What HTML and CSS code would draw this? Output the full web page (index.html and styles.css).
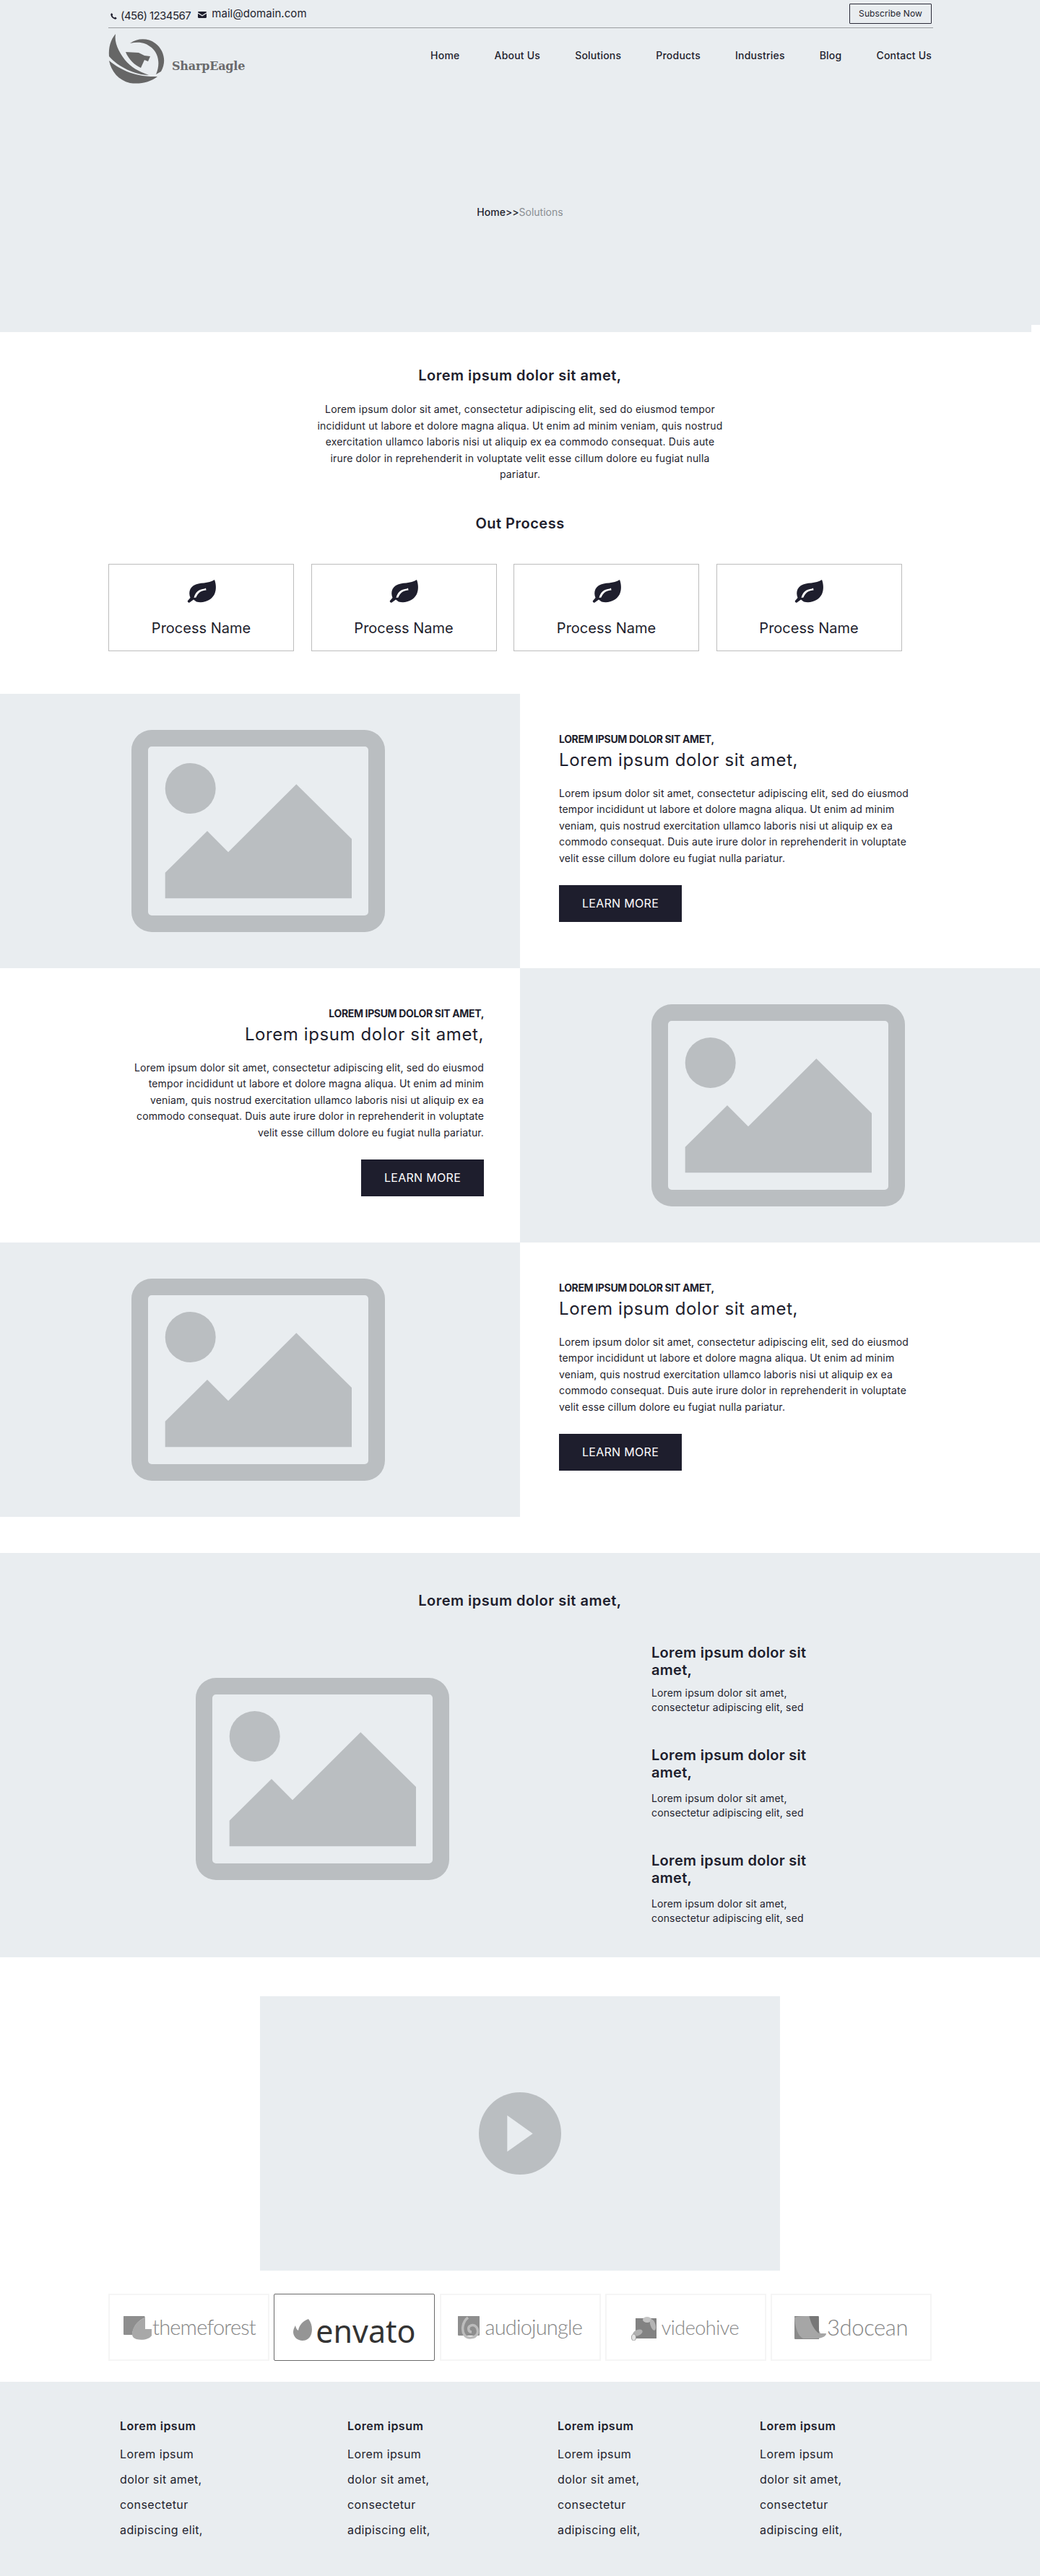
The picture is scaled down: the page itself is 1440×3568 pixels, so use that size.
FILE: index.html
```html
<!DOCTYPE html>
<html lang="en">
<head>
<meta charset="utf-8">
<title>SharpEagle - Solutions</title>
<link rel="stylesheet" href="styles.css">
</head>
<body>
<svg class="defs" width="0" height="0" aria-hidden="true">
  <symbol id="ph" viewBox="0 0 351 280">
    <path fill-rule="evenodd" d="M28 0H323A28 28 0 0 1 351 28V252A28 28 0 0 1 323 280H28A28 28 0 0 1 0 252V28A28 28 0 0 1 28 0ZM28 23A5 5 0 0 0 23 28V252A5 5 0 0 0 28 257H323A5 5 0 0 0 328 252V28A5 5 0 0 0 323 23Z"/>
    <circle cx="81.7" cy="81" r="35"/>
    <path d="M46.700 197.700 105 140 134 169.300 228.300 75.300 305 151V233.300H46.700Z"/>
  </symbol>
  <symbol id="leaf" viewBox="0 0 40 32">
    <path d="M38 0C40 5 41 13 38 20 34 28 24 33 13 30.500L9 27.500 3.500 31.500C2 32.500 0 30.500 1 29L4.500 25C2 19 3 12 9 8 17 3 30 6 38 0Z"/>
    <path fill="#fff" d="M9.500 25C11 18 16 13 24 12.500L26 11.500 26.500 14.500C20 14.500 15 18 12.500 24.500Z"/>
  </symbol>
</svg>

<header class="hero">
  <div class="topbar">
    <div class="contacts">
      <span class="phone">
        <svg class="ic-phone" viewBox="0 0 10 10"><path d="M2.200.4 3.700 2.700 2.800 3.800C3.400 5.300 4.600 6.500 6.200 7.100L7.300 6.200 9.600 7.800C9.300 9 8.200 9.800 7.200 9.600 3.500 8.900 1 6.400.3 2.800.2 1.800 1 .7 2.200.4Z"/></svg>
        (456) 1234567
      </span>
      <span class="mail">
        <svg class="ic-mail" viewBox="0 0 12 9"><path d="M0 1.200C0 .5.500 0 1.200 0H10.800C11.500 0 12 .5 12 1.200L6 5 0 1.200ZM0 2.700V7.800C0 8.500.5 9 1.200 9H10.800C11.500 9 12 8.500 12 7.800V2.700L6 6.500Z"/></svg>
        mail@domain.com
      </span>
    </div>
    <a class="subscribe">Subscribe Now</a>
  </div>
  <div class="navrow">
    <div class="brand">
      <svg class="eagle" viewBox="0 0 78 70">
        <path d="M10 0C8 12 14 24 23 36 31 46 42 52 56 57 38 57 14 46 1 31 0 19 3 8 10 0Z"/>
        <path d="M1 37C15 48 34 60 68 59 58 67 44 70 30 68 14 64 4 52 1 37Z"/>
        <path d="M30 13C40 6 54 5 65 13 77 22 81 38 73 52L66 56C72 42 70 28 60 19 52 12 42 10 30 13Z"/>
        <path d="M24 25 42 26 50 30 58 31 55 38 50 36 45 47C36 43 28 35 24 25Z"/>
      </svg>
      <span class="brand-name">SharpEagle</span>
    </div>
    <nav class="nav">
      <a>Home</a><a>About Us</a><a>Solutions</a><a>Products</a><a>Industries</a><a>Blog</a><a>Contact Us</a>
    </nav>
  </div>
  <div class="crumbs"><span>Home</span><span>&gt;&gt;</span><span class="crumb-current">Solutions</span></div>
</header>

<section class="intro">
  <h2 class="h-center">Lorem ipsum dolor sit amet,</h2>
  <p class="intro-text">Lorem ipsum dolor sit amet, consectetur adipiscing elit, sed do eiusmod tempor incididunt ut labore et dolore magna aliqua. Ut enim ad minim veniam, quis nostrud exercitation ullamco laboris nisi ut aliquip ex ea commodo consequat. Duis aute irure dolor in reprehenderit in voluptate velit esse cillum dolore eu fugiat nulla pariatur.</p>
  <h2 class="h-center process-title">Out Process</h2>
  <div class="cards">
    <div class="card"><svg class="leaf"><use href="#leaf"/></svg><span>Process Name</span></div>
    <div class="card"><svg class="leaf"><use href="#leaf"/></svg><span>Process Name</span></div>
    <div class="card"><svg class="leaf"><use href="#leaf"/></svg><span>Process Name</span></div>
    <div class="card"><svg class="leaf"><use href="#leaf"/></svg><span>Process Name</span></div>
  </div>
</section>

<section class="split">
  <div class="media"><svg class="ph"><use href="#ph"/></svg></div>
  <div class="copy">
    <h4>LOREM IPSUM DOLOR SIT AMET,</h4>
    <h3>Lorem ipsum dolor sit amet,</h3>
    <p>Lorem ipsum dolor sit amet, consectetur adipiscing elit, sed do eiusmod tempor incididunt ut labore et dolore magna aliqua. Ut enim ad minim veniam, quis nostrud exercitation ullamco laboris nisi ut aliquip ex ea commodo consequat. Duis aute irure dolor in reprehenderit in voluptate velit esse cillum dolore eu fugiat nulla pariatur.</p>
    <a class="btn">LEARN MORE</a>
  </div>
</section>
<section class="split">
  <div class="copy copy-right">
    <h4>LOREM IPSUM DOLOR SIT AMET,</h4>
    <h3>Lorem ipsum dolor sit amet,</h3>
    <p>Lorem ipsum dolor sit amet, consectetur adipiscing elit, sed do eiusmod tempor incididunt ut labore et dolore magna aliqua. Ut enim ad minim veniam, quis nostrud exercitation ullamco laboris nisi ut aliquip ex ea commodo consequat. Duis aute irure dolor in reprehenderit in voluptate velit esse cillum dolore eu fugiat nulla pariatur.</p>
    <a class="btn">LEARN MORE</a>
  </div>
  <div class="media"><svg class="ph"><use href="#ph"/></svg></div>
</section>
<section class="split">
  <div class="media"><svg class="ph"><use href="#ph"/></svg></div>
  <div class="copy">
    <h4>LOREM IPSUM DOLOR SIT AMET,</h4>
    <h3>Lorem ipsum dolor sit amet,</h3>
    <p>Lorem ipsum dolor sit amet, consectetur adipiscing elit, sed do eiusmod tempor incididunt ut labore et dolore magna aliqua. Ut enim ad minim veniam, quis nostrud exercitation ullamco laboris nisi ut aliquip ex ea commodo consequat. Duis aute irure dolor in reprehenderit in voluptate velit esse cillum dolore eu fugiat nulla pariatur.</p>
    <a class="btn">LEARN MORE</a>
  </div>
</section>

<section class="features">
  <h2 class="h-center">Lorem ipsum dolor sit amet,</h2>
  <div class="features-body">
    <svg class="ph features-ph"><use href="#ph"/></svg>
    <div class="feature-list">
      <div class="feature"><h3>Lorem ipsum dolor sit amet,</h3><p>Lorem ipsum dolor sit amet, consectetur adipiscing elit, sed</p></div>
      <div class="feature"><h3>Lorem ipsum dolor sit amet,</h3><p>Lorem ipsum dolor sit amet, consectetur adipiscing elit, sed</p></div>
      <div class="feature"><h3>Lorem ipsum dolor sit amet,</h3><p>Lorem ipsum dolor sit amet, consectetur adipiscing elit, sed</p></div>
    </div>
  </div>
</section>

<section class="video">
  <svg class="play" viewBox="0 0 114 114"><circle cx="57" cy="57" r="57"/><path class="play-tri" d="M39.300 32 74.700 57.300 39.300 82.300Z"/></svg>
</section>

<section class="logos">
  <div class="logo">
    <svg class="logo-ic ic-tf" viewBox="0 0 39 33"><path fill="#8e8e8e" d="M1 0H29L30 2C20 6 13 14 12 26L1 26C0 26 0 25 0 25V1C0 0 0 0 1 0Z"/><path fill="#a8a8a8" d="M30 2V18H39V27C36 32 26 34 18 32 13 30 12 28 12 24 13 14 20 6 30 2Z"/></svg>
    <span class="lt lt-tf">themeforest</span>
  </div>
  <div class="logo logo-active">
    <svg class="logo-ic ic-env" viewBox="0 0 26 30"><path fill="#959595" d="M21 0C26 6 27 14 25 21 23 27 18 30 13 30 6 30 0 25 0 18 0 14 2 11 3 9 4 13 5 15 7 16 8 9 13 3 21 0Z"/></svg>
    <span class="lt lt-env">envato</span>
  </div>
  <div class="logo">
    <svg class="logo-ic ic-aj" viewBox="0 0 30 33"><path fill="#8e8e8e" d="M1 0H29C30 0 30 0 30 1V25C30 26 30 27 29 27H1C0 27 0 26 0 25V1C0 0 0 0 1 0Z"/><path fill="none" stroke="#bcbcbc" stroke-width="3.500" d="M14 2C6 8 5 20 9 26 13 32 24 31 27 24 29 17 24 11 18 13 13 15 14 22 19 22"/></svg>
    <span class="lt lt-aj">audiojungle</span>
  </div>
  <div class="logo">
    <svg class="logo-ic ic-vh" viewBox="0 0 35 34"><path fill="#828282" d="M6 3H34C35 3 35 3 35 4V30C35 31 35 31 34 31H6Z"/><ellipse cx="22" cy="5" rx="6" ry="4" fill="#c4c4c4"/><ellipse cx="30" cy="12" rx="3.500" ry="8" fill="#b4b4b4" transform="rotate(-18 30 12)"/><ellipse cx="9" cy="23" rx="7" ry="4" fill="#b0b0b0" transform="rotate(-22 9 23)"/><ellipse cx="3.500" cy="29.500" rx="3" ry="4.500" fill="#e4e4e4" stroke="#999"/></svg>
    <span class="lt lt-vh">videohive</span>
  </div>
  <div class="logo">
    <svg class="logo-ic ic-3d" viewBox="0 0 44 34"><path fill="#8a8a8a" d="M1 0H33C34 0 34 1 34 2V32H1C0 32 0 31 0 30V1C0 0 0 0 1 0Z"/><path fill="#a6a6a6" d="M0 2C6 0 14 0 20 0 22 8 30 16 34 20L36 24H44C44 28 38 31 30 31H12C5 28 1 16 0 2Z"/><path fill="#777" d="M21 0H33L34 24C28 20 22 10 21 0Z"/></svg>
    <span class="lt lt-3d">3docean</span>
  </div>
</section>

<footer class="footer">
  <div class="fcol"><h5>Lorem ipsum</h5><a>Lorem ipsum</a><a>dolor sit amet,</a><a>consectetur</a><a>adipiscing elit,</a></div>
  <div class="fcol"><h5>Lorem ipsum</h5><a>Lorem ipsum</a><a>dolor sit amet,</a><a>consectetur</a><a>adipiscing elit,</a></div>
  <div class="fcol"><h5>Lorem ipsum</h5><a>Lorem ipsum</a><a>dolor sit amet,</a><a>consectetur</a><a>adipiscing elit,</a></div>
  <div class="fcol"><h5>Lorem ipsum</h5><a>Lorem ipsum</a><a>dolor sit amet,</a><a>consectetur</a><a>adipiscing elit,</a></div>
</footer>
</body>
</html>
```
FILE: styles.css
```css
* { box-sizing: border-box; }
html, body { margin: 0; padding: 0; }
body {
  font-family: Inter, "Liberation Sans", sans-serif;
  color: #1e1e2d;
  background: #fff;
  width: 1440px;
  overflow-x: hidden;
}
h2, h3, h4, h5, p { margin: 0; }
.defs { position: absolute; }

/* hero */
.hero {
  position: relative;
  height: 460px;
  background: #e9edf0;
  padding: 0 148px 0 150px;
}
.hero::after {
  content: "";
  position: absolute;
  right: 0; bottom: 0;
  width: 12px; height: 10px;
  background: #fff;
}
.topbar {
  height: 39px;
  border-bottom: 1px solid #9a9da0;
  display: flex;
  justify-content: space-between;
  align-items: flex-start;
  padding-right: 2px;
}
.contacts { display: flex; align-items: flex-start; padding-left: 3px; }
.phone { display: flex; align-items: center; gap: 5px; font-size: 15px; line-height: 20px; padding-top: 12px; letter-spacing: -0.55px; }
.mail { display: flex; align-items: center; gap: 7px; font-size: 15px; line-height: 20px; padding-top: 9px; margin-left: 10px; letter-spacing: 0.05px; }
.ic-phone { width: 9px; height: 9px; fill: #1e1e2d; }
.ic-mail { width: 12px; height: 9px; fill: #1e1e2d; margin-top: 3px; }
.subscribe {
  margin-top: 5px;
  width: 114px;
  height: 28px;
  border: 1px solid #2a2a38;
  border-radius: 1px;
  font-size: 12px;
  line-height: 26px;
  text-align: center;
  letter-spacing: 0.1px;
}
.navrow { display: flex; justify-content: space-between; align-items: flex-start; padding-right: 2px; }
.brand { display: flex; align-items: flex-start; margin-top: 8px; }
.eagle { width: 78px; height: 70px; fill: #666; display: block; }
.brand-name {
  font-family: "DejaVu Serif", "Liberation Serif", serif;
  font-weight: 700;
  font-size: 16px;
  line-height: 22px;
  color: #6a6a6c;
  margin: 34px 0 0 10px;
  letter-spacing: -0.2px;
}
.nav { display: flex; gap: 48px; margin-top: 28px; }
.nav a { font-size: 14px; line-height: 20px; font-weight: 500; letter-spacing: 0.22px; }
.crumbs {
  display: flex;
  justify-content: center;
  margin-top: 167px;
  font-size: 14px;
  line-height: 20px;
  font-weight: 500;
  width: 1142px;
  padding-right: 2px;
}
.crumb-current { color: #8a8d92; font-weight: 400; }

/* intro */
.intro { padding: 45px 0 59px; }
.h-center { text-align: center; font-size: 20px; line-height: 30px; font-weight: 600; letter-spacing: 0.5px; }
.intro-text {
  width: 570px;
  margin: 21px auto 0;
  text-align: center;
  font-size: 14px;
  line-height: 22.5px;
  letter-spacing: 0.18px;
}
.process-title { margin-top: 41px; }
.cards { display: flex; gap: 23.5px; margin: 41px 0 0 150px; }
.card {
  width: 257px;
  height: 121px;
  border: 1px solid #bdbdbd;
  display: flex;
  flex-direction: column;
  align-items: center;
  padding-top: 21px;
}
.leaf { width: 40px; height: 32px; fill: #1e1e2d; display: block; }
.card span { font-size: 20px; line-height: 30px; margin-top: 20px; }

/* split */
.split { display: flex; height: 380px; }
.media { width: 720px; height: 380px; background: #e9edf0; display: flex; align-items: center; justify-content: center; }
.media .ph { margin-right: 5px; }
.ph { width: 351px; height: 280px; fill: #babec1; display: block; }
.copy { width: 720px; padding: 53px 0 0 54px; }
.copy h4 { font-size: 14px; line-height: 20px; font-weight: 700; letter-spacing: -0.35px; }
.copy h3 { font-size: 24px; line-height: 36px; font-weight: 400; margin-top: 1px; letter-spacing: 0.6px; }
.copy p { font-size: 14px; line-height: 22.5px; margin-top: 17px; width: 500px; letter-spacing: 0.13px; }
.btn {
  display: block;
  width: 170px;
  height: 51px;
  margin-top: 26px;
  background: #1e1e2d;
  color: #fff;
  font-size: 16px;
  line-height: 51px;
  text-align: center;
  letter-spacing: 0.3px;
}
.copy-right { padding: 53px 50px 0 0; text-align: right; }
.copy-right p { margin-left: auto; }
.copy-right .btn { margin-left: auto; }

/* features */
.features { margin-top: 50px; height: 560px; background: #e9edf0; padding-top: 51px; }
.features-body { display: flex; align-items: flex-start; margin-top: 45px; padding-left: 271px; }
.features-ph { margin-top: 47px; }
.feature-list { margin-left: 280px; width: 240px; }
.feature h3 { font-size: 20px; line-height: 24px; font-weight: 600; letter-spacing: 0.3px; }
.feature p { font-size: 14px; line-height: 20px; margin-top: 14px; letter-spacing: 0.15px; }
.feature + .feature { margin-top: 44px; }
.feature:first-child p { margin-top: 10px; }

/* video */
.video {
  width: 720px;
  height: 380px;
  margin: 54px auto 0;
  background: #e9edf0;
  display: flex;
  align-items: center;
  justify-content: center;
}
.play { width: 114px; height: 114px; fill: #babec1; }
.play-tri { fill: #e9edf0; }

/* logos */
.logos { display: flex; gap: 6.25px; margin: 32px 0 0 150px; }
.logo {
  position: relative;
  width: 223px;
  height: 93px;
  border: 2px solid #f5f5f5;
  display: flex;
  align-items: flex-start;
  padding-top: 29px;
}
.logo-active { border: 1px solid #6a6a6a; border-radius: 2px; padding-top: 30px; }
.logo-ic { display: block; flex: none; }
.ic-tf { width: 39px; height: 33px; margin-left: 19px; }
.ic-env { width: 26px; height: 30px; margin: 4px 0 0 26px; }
.ic-aj { width: 30px; height: 33px; margin-left: 23px; }
.ic-vh { width: 35px; height: 34px; margin-left: 34px; }
.ic-3d { width: 44px; height: 34px; margin-left: 31px; }
.lt { font-family: Lato, "Open Sans", sans-serif; font-weight: 300; color: #858585; font-size: 29px; line-height: 30px; }
.lt-tf { margin: 0 0 0 1px; letter-spacing: -0.8px; }
.lt-env { font-family: "Noto Sans", Inter, sans-serif; font-weight: 400; color: #333; font-size: 43px; line-height: 44px; margin: -1px 0 0 5px; letter-spacing: 0; }
.lt-aj { margin-left: 8px; letter-spacing: -0.8px; }
.lt-vh { margin: 1px 0 0 7px; font-size: 27px; letter-spacing: -0.5px; }
.lt-3d { margin: 0 0 0 1px; font-size: 31px; letter-spacing: -0.4px; }

/* footer */
.footer {
  margin-top: 29px;
  height: 270px;
  background: #e9edf0;
  padding: 49px 0 0 166px;
  display: grid;
  grid-template-columns: 315px 291px 280px auto;
  align-content: start;
}
.fcol { display: flex; flex-direction: column; }
.fcol h5 { font-size: 16px; line-height: 24px; font-weight: 600; margin-bottom: 10px; letter-spacing: 0.5px; }
.fcol a { font-size: 16px; line-height: 35px; letter-spacing: 0.4px; }
```
